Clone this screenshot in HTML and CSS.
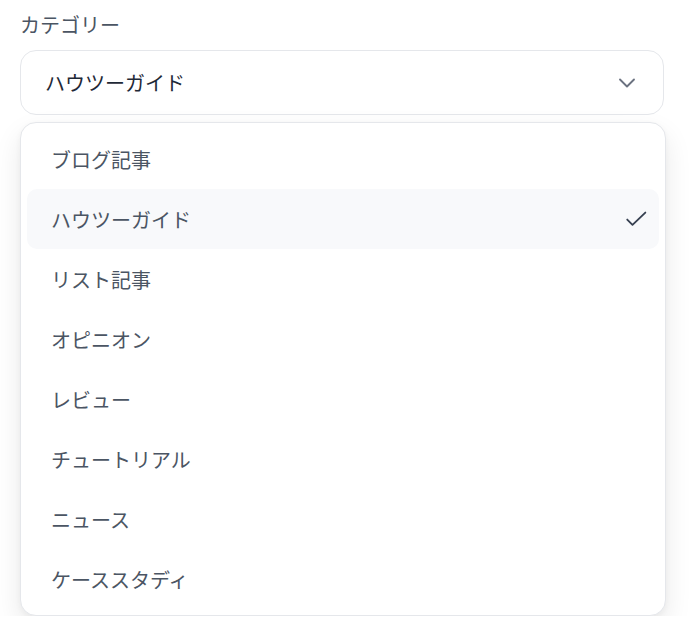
FILE: index.html
```html
<!DOCTYPE html>
<html lang="ja">
<head>
<meta charset="utf-8">
<link rel="stylesheet" href="styles.css">
</head>
<body>
<div class="field">
  <div class="label">カテゴリー</div>
  <div class="trigger">
    <span class="value">ハウツーガイド</span>
    <svg class="chevron" width="28" height="28" viewBox="0 0 24 24" fill="none" stroke="currentColor" stroke-width="1.6" stroke-linecap="round" stroke-linejoin="round"><path d="M6 9l6 6 6-6"/></svg>
  </div>
  <div class="menu">
    <div class="item">ブログ記事</div>
    <div class="item selected">ハウツーガイド
      <svg class="check" width="28" height="28" viewBox="0 0 24 24" fill="none" stroke="currentColor" stroke-width="1.6" stroke-linecap="round" stroke-linejoin="round"><path d="M4.5 12.5l4.5 4.5L20 6.5"/></svg>
    </div>
    <div class="item">リスト記事</div>
    <div class="item">オピニオン</div>
    <div class="item">レビュー</div>
    <div class="item">チュートリアル</div>
    <div class="item">ニュース</div>
    <div class="item">ケーススタディ</div>
  </div>
</div>
</body>
</html>
```

FILE: styles.css
```css
html, body {
  margin: 0;
  padding: 0;
  background: #ffffff;
}
body {
  font-family: "Noto Sans CJK JP", "Noto Sans", sans-serif;
  padding: 11px 20px 0 20px;
}
.field {
  width: 644px;
  display: flex;
  flex-direction: column;
}
.label {
  font-size: 20px;
  line-height: 28px;
  color: #4b5563;
  margin-bottom: 11px;
}
.trigger {
  box-sizing: border-box;
  height: 65px;
  border: 1px solid #e5e7eb;
  border-radius: 16px;
  display: flex;
  align-items: center;
  justify-content: space-between;
  padding: 0 22px 0 24px;
  color: #1f2937;
  font-size: 20px;
}
.chevron {
  color: #6b7280;
}
.menu {
  box-sizing: border-box;
  width: 646px;
  margin-top: 7px;
  border: 1px solid #e5e7eb;
  border-radius: 16px;
  padding: 6px 6px;
  background: #fff;
  box-shadow: 0 12px 28px rgba(0, 0, 0, 0.09), 0 2px 6px rgba(0, 0, 0, 0.04);
  display: flex;
  flex-direction: column;
}
.item {
  height: 60px;
  display: flex;
  align-items: center;
  justify-content: space-between;
  padding: 0 9px 0 24px;
  font-size: 20px;
  color: #4b5563;
  border-radius: 10px;
}
.item.selected {
  background: #f8f9fb;
}
.check {
  color: #374151;
}
```
